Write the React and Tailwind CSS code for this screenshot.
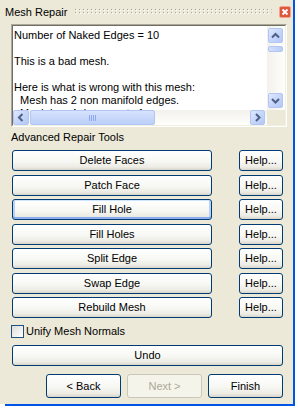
import clsx from 'clsx'

const TOOLS = ['Delete Faces', 'Patch Face', 'Fill Hole', 'Fill Holes', 'Split Edge', 'Swap Edge', 'Rebuild Mesh']

const LINES = [
  'Number of Naked Edges = 10',
  '',
  'This is a bad mesh.',
  '',
  'Here is what is wrong with this mesh:',
  '  Mesh has 2 non manifold edges.',
  '  Mesh has 4 degenerate faces.',
]

function XpButton({ children, className, focused, disabled }) {
  return (
    <button
      className={clsx(
        'flex items-center justify-center rounded-[3px] border leading-none',
        disabled
          ? 'border-[#c9c7ba] bg-[#f5f4ea] text-[#aca899]'
          : 'border-[#003c74] bg-[linear-gradient(180deg,#ffffff_0%,#f7f7f3_55%,#ecebe4_85%,#d8d4c8_100%)] text-black',
        focused && 'shadow-[inset_0_1px_0_#cee7ff,inset_0_-2px_0_#89adf0,inset_2px_0_0_#b9d1f8,inset_-2px_0_0_#b9d1f8]',
        className
      )}
    >
      {children}
    </button>
  )
}

function ScrollBtn({ dir, className }) {
  const paths = {
    up: 'M4 9.5 L7.5 6 L11 9.5',
    down: 'M4 6 L7.5 9.5 L11 6',
    left: 'M9.5 4 L6 7.5 L9.5 11',
    right: 'M6 4 L9.5 7.5 L6 11',
  }
  return (
    <div className={clsx('w-[15px] h-[15px] shrink-0 rounded-[2px] border border-[#b2c6f3] bg-[linear-gradient(135deg,#dfe8fe_0%,#c6d6fb_50%,#b4c8f6_100%)]', className)}>
      <svg width="13" height="13" viewBox="1 1 13 13">
        <path d={paths[dir]} fill="none" stroke="#4d6185" strokeWidth="2" />
      </svg>
    </div>
  )
}

function Grip() {
  return (
    <svg className="block w-full h-[6px]" height="6">
      <defs>
        <pattern id="grip" width="4" height="6" patternUnits="userSpaceOnUse">
          <rect x="0" y="0" width="1" height="1" fill="#a8a597" />
          <rect x="1" y="1" width="1" height="1" fill="#ffffff" />
          <rect x="0" y="3" width="1" height="1" fill="#a8a597" />
          <rect x="1" y="4" width="1" height="1" fill="#ffffff" />
        </pattern>
      </defs>
      <rect width="100%" height="6" fill="url(#grip)" />
    </svg>
  )
}

export default function App() {
  return (
    <div className="w-[298px] h-[411px] bg-white flex flex-col overflow-hidden font-['Liberation_Sans',Arial,sans-serif] text-[11px] text-black">
      <div className="flex h-[404px]">
        <div className="w-[293px] h-full bg-[#ece9d8] flex flex-col">
          {/* Title bar */}
          <div className="h-[24px] flex items-center pl-[5px] pr-[2px] shrink-0">
            <span className="whitespace-nowrap shrink-0">Mesh Repair</span>
            <div className="flex-1 min-w-0 ml-[8px] mr-[7px]">
              <Grip />
            </div>
            <svg width="12" height="12" viewBox="0 0 12 12" className="shrink-0">
              <rect x="0.5" y="0.5" width="11" height="11" rx="1.5" fill="#e0553a" stroke="#f2a38f" />
              <path d="M3.5 3.5 L8.5 8.5 M8.5 3.5 L3.5 8.5" stroke="#ffffff" strokeWidth="2" />
            </svg>
          </div>

          {/* Report box */}
          <div className="ml-[11px] w-[276px] h-[103px] shrink-0 border border-[#aca899] border-r-white border-b-white">
            <div className="h-full border border-[#716f64] border-r-[#f1efe2] border-b-[#f1efe2] bg-white flex flex-col">
              <div className="h-[84px] flex">
                <div className="flex-1 overflow-hidden pt-[3px] pl-[1px] leading-[13px] whitespace-pre">
                  {LINES.map((l, i) => (
                    <div key={i} className="h-[13px]">{l}</div>
                  ))}
                </div>
                <div className="w-[18px] flex flex-col pt-[2px] pb-[2px] pl-[1px] pr-[2px] bg-[linear-gradient(90deg,#f3f1ec,#fefefb)]">
                  <ScrollBtn dir="up" />
                  <div className="mt-[3px] h-[6px] rounded-[2px] border border-[#b2c6f3] bg-[linear-gradient(90deg,#d3e0fd,#b9ccf7)]" />
                  <div className="flex-1" />
                  <ScrollBtn dir="down" />
                </div>
              </div>
              <div className="h-[15px] flex">
                <div className="w-[254px] flex pr-[2px] bg-[linear-gradient(180deg,#f3f1ec,#fefefb)]">
                  <ScrollBtn dir="left" className="w-[16px]" />
                  <div className="ml-[1px] w-[125px] rounded-[2px] border border-[#b2c6f3] bg-[linear-gradient(180deg,#d6e2fd,#bccff8)] flex items-center justify-center gap-[1px]">
                    {[0, 1, 2, 3].map((i) => (
                      <div key={i} className="w-[1px] h-[6px] bg-[#8ca8ee]" />
                    ))}
                  </div>
                  <div className="flex-1" />
                  <ScrollBtn dir="right" />
                </div>
                <div className="flex-1 bg-[#ece9d8]" />
              </div>
            </div>
          </div>

          <div className="mt-[4px] ml-[11px] leading-[13px]">Advanced Repair Tools</div>

          <div className="mt-[6px] pl-[12px] flex flex-col gap-[3.5px]">
            {TOOLS.map((t) => (
              <div key={t} className="flex">
                <XpButton className="w-[200px] h-[21px]" focused={t === 'Fill Hole'}>{t}</XpButton>
                <XpButton className="ml-[27px] w-[44px] h-[21px]">Help...</XpButton>
              </div>
            ))}
          </div>

          <div className="mt-[7px] ml-[11px] h-[13px] flex items-center gap-[2px]">
            <div className="w-[13px] h-[13px] border border-[#1c5180] bg-[linear-gradient(135deg,#dcdcd7,#ffffff)]" />
            <span>Unify Mesh Normals</span>
          </div>

          <XpButton className="mt-[7px] ml-[12px] w-[271px] h-[21px]">Undo</XpButton>

          <div className="mt-[8px] pl-[46px] flex gap-[6px]">
            <XpButton className="w-[75px] h-[24px]">&lt; Back</XpButton>
            <XpButton className="w-[75px] h-[24px]" disabled>Next &gt;</XpButton>
            <XpButton className="w-[75px] h-[24px]">Finish</XpButton>
          </div>
        </div>
        <div className="w-[2px] h-full bg-[#0055e5]" />
      </div>
      <div className="ml-[5px] w-[290px] h-[2px] bg-[#0055e5]" />
    </div>
  )
}
